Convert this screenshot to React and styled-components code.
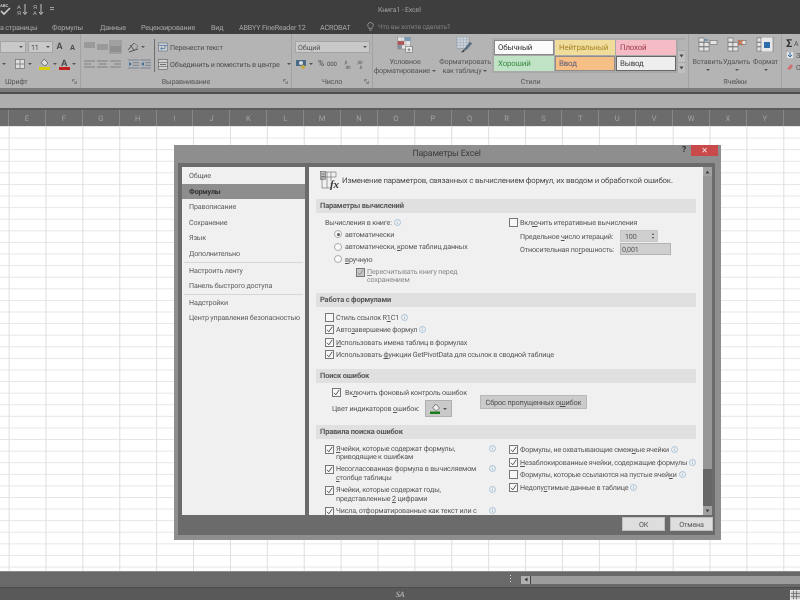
import React from "react";
import styled, { createGlobalStyle } from "styled-components";

const Global = createGlobalStyle`
  html, body { margin: 0; padding: 0; background: #fff; }
  body { font-family: Roboto, "Open Sans", sans-serif; font-size: 7.15px; letter-spacing: -0.17px; text-rendering: geometricPrecision; }
`;

const Window = styled.div`
  position: relative; width: 800px; height: 600px; overflow: hidden;
  display: flex; flex-direction: column; background: #fff; filter: blur(0.25px);
`;

/* ---------- Title + tabs ---------- */
const TitleBar = styled.div`
  height: 20px; flex: none; background: #3e3e3e; color: #9c9c9c; position: relative;
  display: flex; align-items: flex-start; padding-top: 2px; box-sizing: border-box;
`;
const Title = styled.div`
  position: absolute; left: 378px; top: 6px; font-size: 7px; line-height: 9px; color: #a0a0a0;
`;
const Quick = styled.div`display: flex; align-items: center; gap: 5px; margin-left: 0;`;
const TabBar = styled.div`
  height: 14px; flex: none; background: #3e3e3e; display: flex; align-items: center;
  color: #a8a8a8; font-size: 7.2px; white-space: nowrap; overflow: hidden;
`;
const Tab = styled.span`width: ${p => p.$w}px; flex: none;`;
const TellMe = styled.span`color: #808080; font-size: 6.8px;`;

/* ---------- Ribbon ---------- */
const Ribbon = styled.div`
  height: 54px; flex: none; background: #b4b4b4; display: flex; overflow: hidden;
  color: #4c4c4c; font-size: 7.1px; border-bottom: 4px solid #7c7c7c; box-sizing: content-box;
`;
const Group = styled.div`
  width: ${p => p.$w}px; flex: none; box-sizing: border-box; display: flex; flex-direction: column;
  border-right: 1px solid #a2a2a2; position: relative;
`;
const GroupBody = styled.div`flex: 1; min-height: 0; display: flex; flex-direction: ${p => p.$col ? "column" : "row"}; padding: ${p => p.$pad || "0"};`;
const GroupLabel = styled.div`
  height: 13px; line-height: 13px; font-size: 7.2px; color: #555; flex: none;
  text-align: ${p => p.$left ? "left" : "center"}; padding-left: ${p => p.$left ? 5 : 0}px;
  position: relative;
`;
const Launcher = styled.svg`position: absolute; right: 3px; top: 4px;`;
const RibbonCol = styled.div`display: flex; flex-direction: column; justify-content: space-between; height: 31px; margin-top: 6px;`;
const RibbonRow = styled.div`display: flex; align-items: center; height: 14px; padding-left: ${p => p.$pl || 0}px; gap: ${p => p.$gap || 0}px; white-space: nowrap;`;
const FieldBox = styled.div`
  width: ${p => p.$w}px; height: 12px; box-sizing: border-box; background: #c9c9c9;
  border: 1px solid #a4a4a4; display: flex; align-items: center; justify-content: space-between;
  padding: 0 2px; color: #555; font-size: 7.2px; margin-left: ${p => p.$ml || 0}px;
`;
const Caret = styled.span`
  display: inline-block; vertical-align: middle;
  width: 0; height: 0; flex: none; border-left: 2px solid transparent; border-right: 2px solid transparent;
  border-top: 2.5px solid ${p => p.$c || "#555"}; margin-left: ${p => p.$ml || 0}px;
`;
const Gap = styled.span`display: inline-block; flex: none; width: ${p => p.$w}px;`;
const VSep = styled.div`width: 1px; height: 33px; background: #6e6e6e; margin: 5px 3px 0 ${p => p.$ml || 0}px; flex: none;`;
const BigBtn = styled.div`
  width: ${p => p.$w}px; flex: none; display: flex; flex-direction: column; align-items: center;
  margin-left: ${p => p.$ml || 0}px; font-size: 7.2px; line-height: 9px; color: #555; white-space: nowrap; padding-top: 3px;
`;
const BigLabel = styled.div`margin-top: ${p => p.$mt ?? 3}px; text-align: center;`;
const CenterCaret = styled.div`display: flex; justify-content: center; padding-top: 3px;`;
const Selected = styled.div`background: #a0a0a0; width: 13px; height: 14px; display: flex; align-items: center; justify-content: center;`;
const IconCell = styled.div`width: 13px; display: flex; justify-content: center; align-items: center;`;
const GrowA = styled.b`font-size: ${p => p.$s}px;`;
const SmallText = styled.span`font-size: ${p => p.$s}px;`;
const Gallery = styled.div`
  width: 193px; height: 35px; margin: 4px 0 0 ${p => p.$ml || 0}px; background: #a9a9a9; box-sizing: border-box; flex: none;
  display: flex; padding: 2px 0 0 2px;
`;
const StyleGrid = styled.div`display: grid; grid-template-columns: repeat(3, 60px); grid-template-rows: 15px 15px; gap: 1px 1px;`;
const StyleCell = styled.div`
  background: ${p => p.$bg}; color: ${p => p.$c}; box-sizing: border-box;
  border: ${p => p.$b ? `1px solid ${p.$b}` : "none"}; display: flex; align-items: center; padding-left: ${p => p.$b ? 3 : 4}px;
  font-size: 7.9px;
`;
const GalleryScroll = styled.div`width: 7px; margin-left: 2px; display: flex; flex-direction: column; gap: 1px;`;
const GalleryBtn = styled.div`
  flex: 1; background: ${p => p.$off ? "#b4b4b4" : "#c0c0c0"}; display: flex; align-items: center; justify-content: center;
`;
const EditRow = styled.div`display: flex; align-items: center; gap: 2px; height: 12px; padding-left: 4px; color: #555;`;
const Sigma = styled.b`font-size: 11px; color: #333;`;

/* ---------- Formula bar, headers, grid ---------- */
const FormulaBar = styled.div`
  height: 14px; flex: none; background: #aeaeae; border-top: 2px solid #4e4e4e; border-bottom: 2px solid #5c5c5c;
`;
const ColHeader = styled.div`
  height: 16px; flex: none; background: #6c6c6c; display: flex; color: #a2a2a2; font-size: 7.6px; overflow: hidden;
`;
const ColCell = styled.div`
  width: ${p => p.$w}px; flex: none; box-sizing: border-box; border-right: 1px solid #888;
  display: flex; align-items: center; justify-content: center;
`;
const Grid = styled.div`
  flex: 1; min-height: 0;
  background-color: #fff;
  background-image:
    linear-gradient(to right, #dedede 1px, transparent 1px),
    linear-gradient(to bottom, #e6e6e6 1px, transparent 1px);
  background-size: 36.9px 11.6px;
  background-position: 8.6px 0;
`;
const SheetBar = styled.div`
  height: 16px; flex: none; background: #696969; border-top: 1px solid #8c8c8c; box-sizing: border-box;
  display: flex; align-items: center; padding-left: 510px;
`;
const Dots = styled.div`width: 1px; height: 9px; margin-right: 10px; background: repeating-linear-gradient(#ddd 0 1px, transparent 1px 3px);`;
const HScroll = styled.div`flex: 1; height: 8px; background: #9c9c9c; display: flex;`;
const HArrow = styled.div`width: 9px; background: #b0b0b0; border-right: 1px solid #444; display: flex; align-items: center; justify-content: center;`;
const StatusBar = styled.div`
  height: 13px; flex: none; background: #595959; border-top: 1px solid #4d4d4d; box-sizing: border-box;
  position: relative; display: flex; align-items: center; justify-content: center;
  color: #c8c8c8; font: italic 8px "Liberation Serif", serif;
`;
const ViewIcon = styled.svg`position: absolute; right: 0; top: 2px;`;

/* ---------- Dialog ---------- */
const Dialog = styled.div`
  position: absolute; left: 174px; top: 145px; width: 547px; height: 395px; box-sizing: border-box;
  background: #8e8e8e; display: flex; flex-direction: column; padding: 0 6px 5px 4px; color: #565656;
`;
const DialogTitle = styled.div`
  height: 18px; flex: none; position: relative; display: flex; justify-content: center; align-items: center;
  font-size: 8.8px; color: #3c3c3c;
`;
const Help = styled.span`position: absolute; right: 29px; top: 0; color: #333; font-size: 8.5px; font-weight: 700;`;
const CloseBtn = styled.div`
  position: absolute; right: -3px; top: 0; width: 27px; height: 11px; background: #c84a4a; color: #f3e0e0;
  display: flex; align-items: center; justify-content: center; font-size: 8px; line-height: 11px;
`;
const DialogInner = styled.div`
  flex: 1; min-height: 0; background: #6b6b6b; padding: 4px 3px 0 4px; display: flex; flex-direction: column;
`;
const DialogBody = styled.div`height: 348px; flex: none; display: flex; gap: 4px;`;
const Nav = styled.div`width: 123px; flex: none; background: #f0f0f0; padding-top: 1px; box-sizing: border-box; display: flex; flex-direction: column;`;
const NavItem = styled.div`
  height: 15.6px; flex: none; line-height: 15.6px; padding-left: 7px; white-space: nowrap; font-size: 7.15px;
  background: ${p => p.$active ? "#8d8d8d" : "transparent"}; color: ${p => p.$active ? "#333" : "#5c5c5c"};
  font-weight: ${p => p.$active ? 700 : 400};
`;
const NavDivider = styled.div`height: 1px; background: #d6d6d6; margin: 0 2px;`;
const Panel = styled.div`flex: 1; min-width: 0; background: #f0f0f0; overflow: hidden; padding: 3px 7px 0 7px; box-sizing: border-box;`;
const Intro = styled.div`display: flex; align-items: center; height: 21px; padding-left: 4px; gap: 2px; font-size: 7.8px; color: #4d4d4d; white-space: nowrap;`;
const SectionHead = styled.div`
  height: 14px; line-height: 13px; background: #e0e0e0; font-weight: 700; color: #595959; padding-left: 4px;
  margin-top: ${p => p.$mt || 0}px; font-size: 7.5px;
`;
const Cols = styled.div`display: flex; padding-top: ${p => p.$pt || 0}px;`;
const LeftCol = styled.div`width: ${p => p.$full ? "100%" : "193px"}; flex: none; padding: ${p => p.$pt || 0}px 0 0 9px; box-sizing: border-box; position: relative;`;
const RightCol = styled.div`flex: 1; min-width: 0;`;
const Line = styled.div`
  display: flex; align-items: center; height: ${p => p.$h || 12.6}px; padding-left: ${p => p.$pl || 0}px; white-space: nowrap; gap: 2px; color: ${p => p.$c || "#565656"};
`;
const TwoLine = styled.div`
  display: flex; align-items: flex-start; gap: 2px; padding: ${p => p.$pt || 0}px 0 0 ${p => p.$pl || 0}px; height: ${p => p.$h || 20.7}px; box-sizing: border-box; line-height: 8.6px; position: relative; color: ${p => p.$c || "#565656"};
`;
const Box = styled.span`
  width: 7px; height: 7px; flex: none; background: ${p => p.$dis ? "#c6c6c6" : "#f7f7f7"}; border: 0.6px solid #777;
  display: flex; align-items: center; justify-content: center; box-sizing: content-box;
`;
const Radio = styled.span`
  width: 6px; height: 6px; flex: none; border-radius: 50%; background: #fbfbfb; border: 0.5px solid #aaa; margin-right: 1px;
  display: flex; align-items: center; justify-content: center;
`;
const RadioDot = styled.span`width: 3px; height: 3px; border-radius: 50%; background: #555;`;
const U = styled.span`text-decoration: underline; text-underline-offset: 1px; text-decoration-thickness: 0.5px;`;
const FormRow = styled.div`display: flex; align-items: center; height: 13px; padding-left: 11px; white-space: nowrap;`;
const FormLabel = styled.span`width: 100px; flex: none;`;
const NumberBox = styled.div`
  width: ${p => p.$w}px; height: 12.5px; box-sizing: border-box; background: #cfcfcf; display: flex; align-items: center; justify-content: space-between;
  border: 0.6px solid ${p => p.$b || "#c6c6c6"}; padding: 0 ${p => p.$pr ?? 3}px 0 ${p => p.$pl ?? 4}px;
`;
const Spin = styled.div`display: flex; flex-direction: column; gap: 2px;`;
const SpinUp = styled.span`width: 0; height: 0; border-left: 1.5px solid transparent; border-right: 1.5px solid transparent; border-bottom: 2px solid #444;`;
const SpinDown = styled.span`width: 0; height: 0; border-left: 1.5px solid transparent; border-right: 1.5px solid transparent; border-top: 2px solid #444;`;
const ColorLabel = styled.span`width: 93px; flex: none; margin-right: -2px;`;
const ColorBtn = styled.div`
  width: 27px; height: 17px; background: #c9c9c9; border: 0.6px solid #b0b0b0; box-sizing: border-box; display: flex; align-items: center; justify-content: center; gap: 2px;
`;
const ErrorArea = styled.div`position: relative; padding-left: 16px; padding-top: 3px; height: 41px; box-sizing: border-box;`;
const ResetBtn = styled.div`
  position: absolute; left: 164px; top: 12px; width: 107px; height: 14px; background: #cbcbcb; border: 0.6px solid #b8b8b8; box-sizing: border-box;
  display: flex; align-items: center; justify-content: center; font-size: 7.4px; color: #505050; white-space: nowrap;
`;
const EnableLabel = styled.span`margin-left: 2px;`;
const RuleInfo = styled.span`position: absolute; right: 13px; top: 0;`;
const Scroll = styled.div`width: 9px; flex: none; background: #676767; display: flex; flex-direction: column; margin-left: -4px;`;
const ScrollBtn = styled.div`height: 9px; flex: none; background: #a2a2a2; display: flex; align-items: center; justify-content: center;`;
const Thumb = styled.div`height: ${p => p.$h}px; flex: none; background: #979797;`;
const ScrollRest = styled.div`flex: 1;`;
const Footer = styled.div`display: flex; justify-content: flex-end; gap: 5px; padding: 2px 0 0 0; margin-right: -1px; position: relative;`;
const DlgBtn = styled.div`
  width: 43px; height: 14px; background: #dedede; display: flex; align-items: center; justify-content: center; color: #555; font-size: 7.2px; border: 0.6px solid #c0c0c0; box-sizing: border-box;
`;
const InfoSvg = styled.svg`flex: none;`;

/* ---------- Icons ---------- */
const Info = () => (
  <InfoSvg width="7" height="7" viewBox="0 0 7 7"><circle cx="3.5" cy="3.5" r="3" fill="none" stroke="#7fa7c9" strokeWidth=".6" /><path d="M3.5 2.9v2.2M3.5 1.6v.7" stroke="#7fa7c9" strokeWidth=".6" /></InfoSvg>
);
const Tick = ({ c = "#444" }) => (
  <svg width="7" height="7" viewBox="0 0 7 7"><path d="M1 3.8l1.8 2L6.2.9" fill="none" stroke={c} strokeWidth=".9" /></svg>
);
const Check = ({ on, dis }) => <Box $dis={dis}>{on && <Tick c={dis ? "#888" : "#444"} />}</Box>;
const Sort = ({ flip }) => (
  <svg width="11" height="13" viewBox="0 0 11 13"><text x="0" y="5.5" fontSize="5.5" fill="#b8b8b8" fontFamily="Liberation Sans">{flip ? "Я" : "А"}</text><text x="0" y="12" fontSize="5.5" fill="#b8b8b8" fontFamily="Liberation Sans">{flip ? "А" : "Я"}</text><path d="M8 1v10M6 9l2 2.5L10 9" fill="none" stroke="#c0c0c0" strokeWidth="1" /></svg>
);
const Spell = () => (
  <svg width="12" height="14" viewBox="0 0 12 14"><text x="0" y="5" fontSize="4" fill="#ccc" fontFamily="Liberation Sans" fontWeight="700">ABC</text><path d="M1 9l3 3 6-6" fill="none" stroke="#ccc" strokeWidth="1.6" /></svg>
);
const VAlign = ({ y0 }) => (
  <svg width="11" height="10" viewBox="0 0 11 10">{[0, 1, 2].map(i => <path key={i} d={`M0 ${y0 + i * 2}H11`} stroke="#7a7a7a" strokeWidth=".9" />)}</svg>
);
const HAlign = ({ a, b }) => (
  <svg width="11" height="10" viewBox="0 0 11 10"><path d={`M0 2H11M${a} 5H${b}M0 8H11`} stroke="#7a7a7a" strokeWidth=".9" /></svg>
);
const Orient = () => <svg width="12" height="11" viewBox="0 0 12 11"><path d="M1 8L7 1M3 3l4 5M2 10l9-3" stroke="#555" strokeWidth="1" fill="none" /><path d="M7 1l4 3-3 4" stroke="#777" fill="none" strokeWidth=".8" /></svg>;
const Indent = ({ out }) => <svg width="11" height="10" viewBox="0 0 11 10"><path d="M0 1h11M0 9h11M5 3.7h6M5 6.3h6" stroke="#6f7f8f" strokeWidth=".9" /><path d={out ? "M4 3v4L1 5z" : "M1 3v4l3-2z"} fill="#3f6f9f" /></svg>;
const Wrap = () => <svg width="10" height="10" viewBox="0 0 10 10"><rect x=".5" y="1" width="9" height="8" fill="#d0d0d0" stroke="#6a7c8c" strokeWidth=".7" /><path d="M1 3.5h8M7 3.5v3H3M4 5L2.6 6.5 4 8" stroke="#3f6f9f" strokeWidth=".7" fill="none" /></svg>;
const Merge = () => <svg width="10" height="11" viewBox="0 0 10 11"><rect x=".5" y=".5" width="9" height="10" fill="#d0d0d0" stroke="#6a6a6a" strokeWidth=".7" /><path d="M.5 3.5h9M.5 7.5h9" stroke="#6a6a6a" strokeWidth=".7" /><path d="M2 5.5h6" stroke="#555" strokeWidth=".8" /></svg>;
const Border = () => <svg width="10" height="10" viewBox="0 0 10 10"><rect x=".5" y=".5" width="9" height="9" fill="#ddd" stroke="#777" strokeWidth=".8" /><path d="M5 .5v9M.5 5h9" stroke="#777" strokeWidth=".8" /></svg>;
const Fill = () => <svg width="11" height="12" viewBox="0 0 11 12"><path d="M5 1l4 4-3 3-4-3z" fill="#ddd" stroke="#555" strokeWidth=".7" /><rect x="0" y="9" width="11" height="3" fill="#d8d000" /></svg>;
const FontColor = () => <svg width="11" height="12" viewBox="0 0 11 12"><text x="2" y="8" fontSize="9" fontFamily="Liberation Sans" fontWeight="700" fill="#444">A</text><rect x="0" y="9" width="11" height="3" fill="#c02020" /></svg>;
const Launch = () => <Launcher width="5" height="5" viewBox="0 0 5 5"><path d="M.5 3V.5H3M1 1l3 3M4.5 2v2.5H2" stroke="#666" strokeWidth=".6" fill="none" /></Launcher>;
const CondFmt = () => (
  <svg width="22" height="20" viewBox="0 0 22 20"><rect x="2" y="0" width="16" height="15" fill="#e8e8e8" stroke="#777" strokeWidth=".6" /><rect x="2" y="5" width="8" height="5" fill="#b05050" /><rect x="10" y="0" width="8" height="5" fill="#7a9ab8" /><rect x="2" y="10" width="5" height="5" fill="#8090a0" /><path d="M2 5h16M2 10h16M7 0v15M12 0v15" stroke="#999" strokeWidth=".5" /><rect x="12" y="12" width="8" height="7" fill="#eee" stroke="#555" strokeWidth=".6" /><path d="M14 16h4M16 14v4" stroke="#333" strokeWidth=".7" /></svg>
);
const TableFmt = () => (
  <svg width="20" height="20" viewBox="0 0 20 20"><rect x="0" y="0" width="15" height="14" fill="#cfd6dc" stroke="#7a8a98" strokeWidth=".6" /><path d="M0 3.5h15M0 7h15M0 10.5h15M4 0v14M8 0v14M12 0v14" stroke="#8c9aa6" strokeWidth=".5" /><path d="M8 16l8-10 3 2-8 9z" fill="#5c6f80" /><path d="M5 19l3-3 2 1-2 2z" fill="#444" /></svg>
);
const CellIcon = ({ kind }) => (
  <svg width="22" height="15" viewBox="0 0 22 15">
    <g fill="#e4e4e4" stroke="#6a6a6a" strokeWidth=".6">
      <rect x="2" y="1" width="5" height="4" /><rect x="2" y="5.5" width="5" height="4" /><rect x="2" y="10" width="5" height="4" /><rect x="7" y="10" width="5" height="4" /><rect x="7" y="5.5" width="5" height="4" />
      {kind !== "format" && <rect x="13" y="3.5" width="7" height="4" />}
    </g>
    {kind === "ins" && <path d="M7 3h4" stroke="#3f6f9f" strokeWidth="1" />}
    {kind === "del" && <path d="M12 3l5 5M17 3l-5 5" stroke="#c8643c" strokeWidth="1.2" />}
    {kind === "format" && <><rect x="6" y="0" width="12" height="15" fill="#e8e8e8" stroke="#6a6a6a" strokeWidth=".6" /><rect x="9" y="5" width="6" height="6" fill="#2f6cab" /></>}
  </svg>
);
const DlgFormula = () => (
  <svg width="20" height="19" viewBox="0 0 20 19"><g stroke="#666" strokeWidth=".6" fill="none"><rect x=".5" y=".5" width="5" height="8" fill="#bbb" /><path d="M1 3h4M1 5.5h4" /><path d="M5.5 1H16V6H2v11h9M7 1v16M11 1v9" /></g><text x="10" y="17" fontSize="11" fontStyle="italic" fontWeight="700" fontFamily="Liberation Serif" fill="#333">fx</text></svg>
);
const Paint = () => <svg width="11" height="11" viewBox="0 0 11 11"><path d="M5.5 1l4 4-3 3-4-3z" fill="#eee" stroke="#555" strokeWidth=".7" /><rect x="0" y="8.5" width="10" height="2.5" fill="#1d7a1d" /></svg>;
const Bulb = () => <svg width="7" height="9" viewBox="0 0 7 9"><path d="M3.5 .5a2.7 2.7 0 0 1 1.5 5v1.3H2V5.5A2.7 2.7 0 0 1 3.5 .5zM2.5 8.3h2" fill="none" stroke="#b0b0b0" strokeWidth=".7" /></svg>;
const Tri = ({ up }) => <svg width="5" height="4" viewBox="0 0 5 4"><path d={up ? "M.5 3.5h4L2.5 .5z" : "M.5 .5h4L2.5 3.5z"} fill="#444" /></svg>;

const letters = "EFGHIJKLMNOPQRSTUVWXY".split("");
const leftRules = [
  [<><U>Я</U>чейки, которые содержат формулы,</>, "приводящие к ошибкам"],
  ["Несогласованная формула в вычисляемом", <><U>с</U>толбце таблицы</>],
  ["Ячейки, которые содержат годы,", <>представленные <U>2</U> цифрами</>],
  ["Числа, отформатированные как текст или с"],
];

export default function App() {
  return (
    <Window>
      <Global />
      <TitleBar>
        <Quick><Spell /><Sort /><Sort flip /><svg width="6" height="6" viewBox="0 0 6 6"><path d="M1 1.5h4M1 3.5h4" stroke="#bbb" strokeWidth=".8" /></svg></Quick>
        <Title>Книга1 - Excel</Title>
      </TitleBar>
      <TabBar>
        <Tab $w={52}>а страницы</Tab>
        <Tab $w={48}>Формулы</Tab>
        <Tab $w={41}>Данные</Tab>
        <Tab $w={70}>Рецензирование</Tab>
        <Tab $w={28}>Вид</Tab>
        <Tab $w={81}>ABBYY FineReader 12</Tab>
        <Tab $w={47}>ACROBAT</Tab>
        <Tab $w={11}><Bulb /></Tab>
        <TellMe>Что вы хотите сделать?</TellMe>
      </TabBar>

      <Ribbon>
        <Group $w={81}>
          <GroupBody>
            <RibbonCol>
              <RibbonRow>
                <FieldBox $w={26}><span /><Caret /></FieldBox>
                <FieldBox $w={25} $ml={2}>11<Caret /></FieldBox>
                <IconCell><GrowA $s={9}>A</GrowA></IconCell>
                <IconCell><GrowA $s={7.5}>A</GrowA></IconCell>
              </RibbonRow>
              <RibbonRow $pl={2}>
                <Caret /><Gap $w={9} /><Border /><Caret $ml={3} /><Gap $w={6.5} /><Fill /><Caret $ml={3.5} /><Gap $w={1.5} /><FontColor /><Caret $ml={2.5} />
              </RibbonRow>
            </RibbonCol>
          </GroupBody>
          <GroupLabel $left>Шрифт<Launch /></GroupLabel>
        </Group>

        <Group $w={211}>
          <GroupBody $pad="0 0 0 2px">
            <RibbonCol>
              <RibbonRow>
                <IconCell><VAlign y0={1} /></IconCell><IconCell><VAlign y0={3} /></IconCell><Selected><VAlign y0={5} /></Selected>
                <Gap $w={5} /><Orient /><Caret $ml={2} />
              </RibbonRow>
              <RibbonRow>
                <IconCell><HAlign a={0} b={7} /></IconCell><IconCell><HAlign a={2} b={9} /></IconCell><IconCell><HAlign a={4} b={11} /></IconCell>
                <Gap $w={6} /><Indent /><Gap $w={1} /><Indent out />
              </RibbonRow>
            </RibbonCol>
            <VSep $ml={3} />
            <RibbonCol>
              <RibbonRow $gap={2}><Wrap />Перенести текст</RibbonRow>
              <RibbonRow $gap={2}><Merge />Объединить и поместить в центре<Caret $ml={5} /></RibbonRow>
            </RibbonCol>
          </GroupBody>
          <GroupLabel>Выравнивание<Launch /></GroupLabel>
        </Group>

        <Group $w={81}>
          <GroupBody $pad="0 0 0 3px">
            <RibbonCol>
              <RibbonRow><FieldBox $w={75}>Общий<Caret /></FieldBox></RibbonRow>
              <RibbonRow $pl={1}>
                <svg width="11" height="10" viewBox="0 0 11 10"><rect x="0" y="1" width="10" height="6" fill="#4a6a8a" /><circle cx="5" cy="4" r="2" fill="#ddd" /><circle cx="7" cy="8" r="2" fill="#c8a83c" /></svg>
                <Caret $ml={2} /><Gap $w={5} /><SmallText $s={8.5}>%</SmallText><Gap $w={3} /><SmallText $s={6}>000</SmallText>
                <Gap $w={7} />
                <svg width="10" height="10" viewBox="0 0 10 10"><text x="0" y="4.5" fontSize="4.5" fill="#555">,0</text><text x="1" y="9.5" fontSize="4.5" fill="#555">,00</text></svg>
                <Gap $w={2} />
                <svg width="10" height="10" viewBox="0 0 10 10"><text x="1" y="4.5" fontSize="4.5" fill="#555">,00</text><text x="3" y="9.5" fontSize="4.5" fill="#555">,0</text></svg>
              </RibbonRow>
            </RibbonCol>
          </GroupBody>
          <GroupLabel>Число<Launch /></GroupLabel>
        </Group>

        <Group $w={316}>
          <GroupBody>
            <BigBtn $w={58} $ml={3}>
              <CondFmt />
              <BigLabel $mt={4}>Условное</BigLabel>
              <div>форматирование<Caret $ml={2} /></div>
            </BigBtn>
            <BigBtn $w={50} $ml={6}>
              <TableFmt />
              <BigLabel $mt={4}>Форматировать</BigLabel>
              <div>как таблицу<Caret $ml={2} /></div>
            </BigBtn>
            <Gallery $ml={2}>
              <StyleGrid>
                <StyleCell $bg="#fbfbfb" $c="#333" $b="#888">Обычный</StyleCell>
                <StyleCell $bg="#f0dd9c" $c="#a88428">Нейтральный</StyleCell>
                <StyleCell $bg="#f5bcc6" $c="#a03c50">Плохой</StyleCell>
                <StyleCell $bg="#bfe3c4" $c="#3c8a48">Хороший</StyleCell>
                <StyleCell $bg="#f6bf86" $c="#5c5a78" $b="#8c8c8c">Ввод</StyleCell>
                <StyleCell $bg="#eeeeee" $c="#444" $b="#666">Вывод</StyleCell>
              </StyleGrid>
              <GalleryScroll>
                <GalleryBtn $off />
                <GalleryBtn><Tri /></GalleryBtn>
                <GalleryBtn><Tri /></GalleryBtn>
              </GalleryScroll>
            </Gallery>
          </GroupBody>
          <GroupLabel>Стили</GroupLabel>
        </Group>

        <Group $w={93}>
          <GroupBody $pad="0 0 0 4px">
            <BigBtn $w={29}><CellIcon kind="ins" /><BigLabel $mt={5}>Вставить</BigLabel><CenterCaret><Caret /></CenterCaret></BigBtn>
            <BigBtn $w={29}><CellIcon kind="del" /><BigLabel $mt={5}>Удалить</BigLabel><CenterCaret><Caret /></CenterCaret></BigBtn>
            <BigBtn $w={29}><CellIcon kind="format" /><BigLabel $mt={5}>Формат</BigLabel><CenterCaret><Caret /></CenterCaret></BigBtn>
          </GroupBody>
          <GroupLabel>Ячейки</GroupLabel>
        </Group>

        <Group $w={40}>
          <GroupBody $col $pad="3px 0 0 0">
            <EditRow><Sigma>Σ</Sigma>А</EditRow>
            <EditRow><svg width="8" height="8" viewBox="0 0 8 8"><rect width="8" height="8" fill="#e2e2e2" stroke="#666" strokeWidth=".6" /><path d="M4 1v5M2 4l2 2 2-2" stroke="#2f6cab" fill="none" /></svg>З</EditRow>
            <EditRow><svg width="8" height="8" viewBox="0 0 8 8"><path d="M1 6l4-5 2 2-3 4z" fill="#d07070" /></svg>О</EditRow>
          </GroupBody>
        </Group>
      </Ribbon>

      <FormulaBar />
      <ColHeader>
        <ColCell $w={9} />
        {letters.map(l => <ColCell key={l} $w={36.9}>{l}</ColCell>)}
      </ColHeader>
      <Grid />
      <SheetBar>
        <Dots />
        <HScroll><HArrow><svg width="4" height="5" viewBox="0 0 4 5"><path d="M3.5 .5v4L.5 2.5z" fill="#333" /></svg></HArrow></HScroll>
      </SheetBar>
      <StatusBar>
        SA
        <ViewIcon width="10" height="10" viewBox="0 0 10 10"><rect x=".5" y=".5" width="10" height="9" fill="#ccc" stroke="#eee" /><path d="M3.5 .5v9M6.5 .5v9M.5 3.5h10M.5 6.5h10" stroke="#666" strokeWidth=".7" /></ViewIcon>
      </StatusBar>

      <Dialog>
        <DialogTitle>
          Параметры Excel
          <Help>?</Help>
          <CloseBtn>✕</CloseBtn>
        </DialogTitle>
        <DialogInner>
          <DialogBody>
            <Nav>
              <NavItem>Общие</NavItem>
              <NavItem $active>Формулы</NavItem>
              <NavItem>Правописание</NavItem>
              <NavItem>Сохранение</NavItem>
              <NavItem>Язык</NavItem>
              <NavItem>Дополнительно</NavItem>
              <NavDivider />
              <NavItem>Настроить ленту</NavItem>
              <NavItem>Панель быстрого доступа</NavItem>
              <NavDivider />
              <NavItem>Надстройки</NavItem>
              <NavItem>Центр управления безопасностью</NavItem>
            </Nav>
            <Panel>
              <Intro><DlgFormula />Изменение параметров, связанных с вычислением формул, их вводом и обработкой ошибок.</Intro>
              <SectionHead $mt={8}>Параметры вычислений</SectionHead>
              <Cols $pt={3}>
                <LeftCol>
                  <Line $h={12}>Вычисления в книге:<Info /></Line>
                  <Line $pl={9}><Radio><RadioDot /></Radio><span>автоматически</span></Line>
                  <Line $pl={9}><Radio /><span>автоматически, <U>к</U>роме таблиц данных</span></Line>
                  <Line $pl={9}><Radio /><span><U>в</U>ручную</span></Line>
                  <TwoLine $pl={31} $pt={2} $c="#8a8a8a" $h={25}><Check on dis /><span><U>П</U>ересчитывать книгу перед<br />сохранением</span></TwoLine>
                </LeftCol>
                <RightCol>
                  <Line $h={13.5}><Check /><span>Вкл<U>ю</U>чить итеративные вычисления</span></Line>
                  <FormRow>
                    <FormLabel>Предельное <U>ч</U>исло итераций:</FormLabel>
                    <NumberBox $w={38}>100<Spin><SpinUp /><SpinDown /></Spin></NumberBox>
                  </FormRow>
                  <FormRow>
                    <FormLabel>Относительная по<U>г</U>решность:</FormLabel>
                    <NumberBox $w={51} $b="#b4b4b4" $pl={1}>0,001</NumberBox>
                  </FormRow>
                </RightCol>
              </Cols>
              <SectionHead $mt={2}>Работа с формулами</SectionHead>
              <Cols $pt={4}>
                <LeftCol $full>
                  <Line><Check /><span>Стиль ссылок R<U>1</U>C1</span><Info /></Line>
                  <Line><Check on /><span>Авто<U>з</U>авершение формул</span><Info /></Line>
                  <Line><Check on /><span><U>И</U>спользовать имена таблиц в формулах</span></Line>
                  <Line><Check on /><span>Использовать <U>ф</U>ункции GetPivotData для ссылок в сводной таблице</span></Line>
                </LeftCol>
              </Cols>
              <SectionHead $mt={8}>Поиск ошибок</SectionHead>
              <ErrorArea>
                <Line $h={12.5}><Check on /><EnableLabel>Вк<U>л</U>ючить фоновый контроль ошибок</EnableLabel></Line>
                <Line $h={20}><ColorLabel>Цвет индикаторов <U>о</U>шибок:</ColorLabel><ColorBtn><Paint /><Caret /></ColorBtn></Line>
                <ResetBtn>Сброс пропущенных о<U>ш</U>ибок</ResetBtn>
              </ErrorArea>
              <SectionHead $mt={1}>Правила поиска ошибок</SectionHead>
              <Cols $pt={4}>
                <LeftCol $pt={1.5}>
                  {leftRules.map((r, i) => (
                    <TwoLine key={i}><Check on /><span>{r[0]}{r[1] && <><br />{r[1]}</>}</span><RuleInfo><Info /></RuleInfo></TwoLine>
                  ))}
                </LeftCol>
                <RightCol>
                  <Line><Check on /><span>Формулы, не охватывающие смеж<U>н</U>ые ячейки</span><Info /></Line>
                  <Line><Check on /><span><U>Н</U>езаблокированные ячейки, содержащие формулы</span><Info /></Line>
                  <Line><Check /><span>Формулы, которые ссылаются на пустые ячей<U>к</U>и</span><Info /></Line>
                  <Line><Check on /><span>Недопу<U>с</U>тимые данные в таблице</span><Info /></Line>
                </RightCol>
              </Cols>
            </Panel>
            <Scroll>
              <ScrollBtn><Tri up /></ScrollBtn>
              <Thumb $h={293} />
              <ScrollRest />
              <ScrollBtn><Tri /></ScrollBtn>
            </Scroll>
          </DialogBody>
          <Footer>
            <DlgBtn>ОК</DlgBtn>
            <DlgBtn>Отмена</DlgBtn>
          </Footer>
        </DialogInner>
      </Dialog>
    </Window>
  );
}
